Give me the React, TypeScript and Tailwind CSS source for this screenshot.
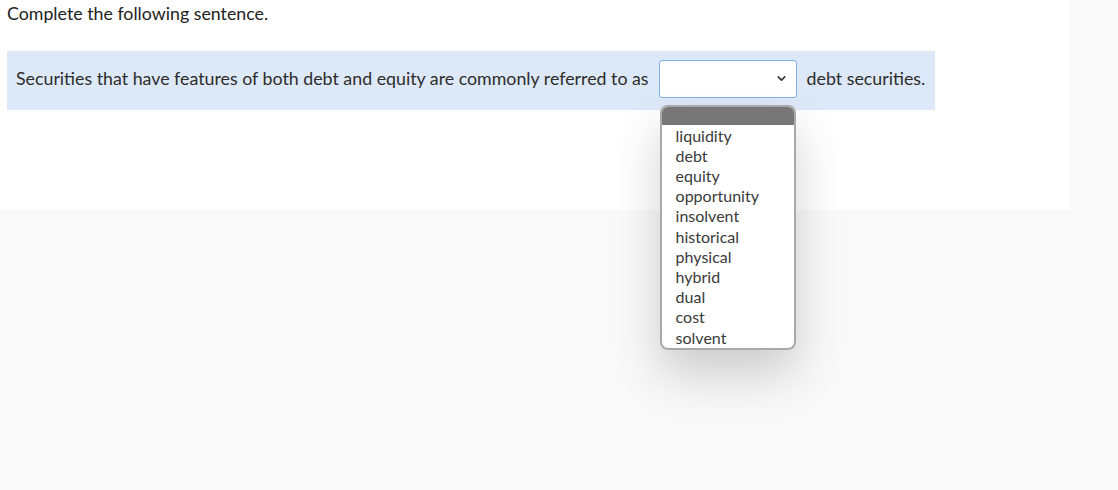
import { ChevronDown } from 'lucide-react'

const options = [
  'liquidity',
  'debt',
  'equity',
  'opportunity',
  'insolvent',
  'historical',
  'physical',
  'hybrid',
  'dual',
  'cost',
  'solvent',
]

export default function App() {
  return (
    <div className="min-h-[490px] w-full bg-[#f9f9f9] font-['Lato',sans-serif] text-[#333]">
      <div className="h-[210px] w-[1070px] bg-white px-[7px] pt-[1px]">
        <p className="text-[17.8px] leading-[24px] text-[#222]">Complete the following sentence.</p>

        <div className="mt-[26px] flex h-[59px] w-[928px] items-center bg-[#dde8f8] pb-[4px] pl-[9px]">
          <span className="text-[17.8px] text-[#2d2d2d]">
            Securities that have features of both debt and equity are commonly referred to as
          </span>
          <div className="relative ml-[10px]">
            <div className="flex h-[38px] w-[138px] items-center justify-end rounded-[3px] border border-[#7fb2e8] bg-white pr-[8px]">
              <ChevronDown size={13} strokeWidth={3} className="text-[#333]" />
            </div>
            <div className="absolute left-[1px] top-[45px] z-10 w-[136px] overflow-hidden rounded-[8px] border-2 border-[#a9a9a9] bg-white shadow-[0_24px_48px_rgba(0,0,0,0.18)]">
              <div className="h-[18px] bg-[#777777]" />
              <ul className="pb-[0px] pl-[14px] pt-[1px]">
                {options.map((o) => (
                  <li key={o} className="text-[16px] leading-[20.2px] text-[#3a3a3a]">
                    {o}
                  </li>
                ))}
              </ul>
            </div>
          </div>
          <span className="ml-[10px] text-[17.8px] text-[#2d2d2d]">debt securities.</span>
        </div>
      </div>
    </div>
  )
}
